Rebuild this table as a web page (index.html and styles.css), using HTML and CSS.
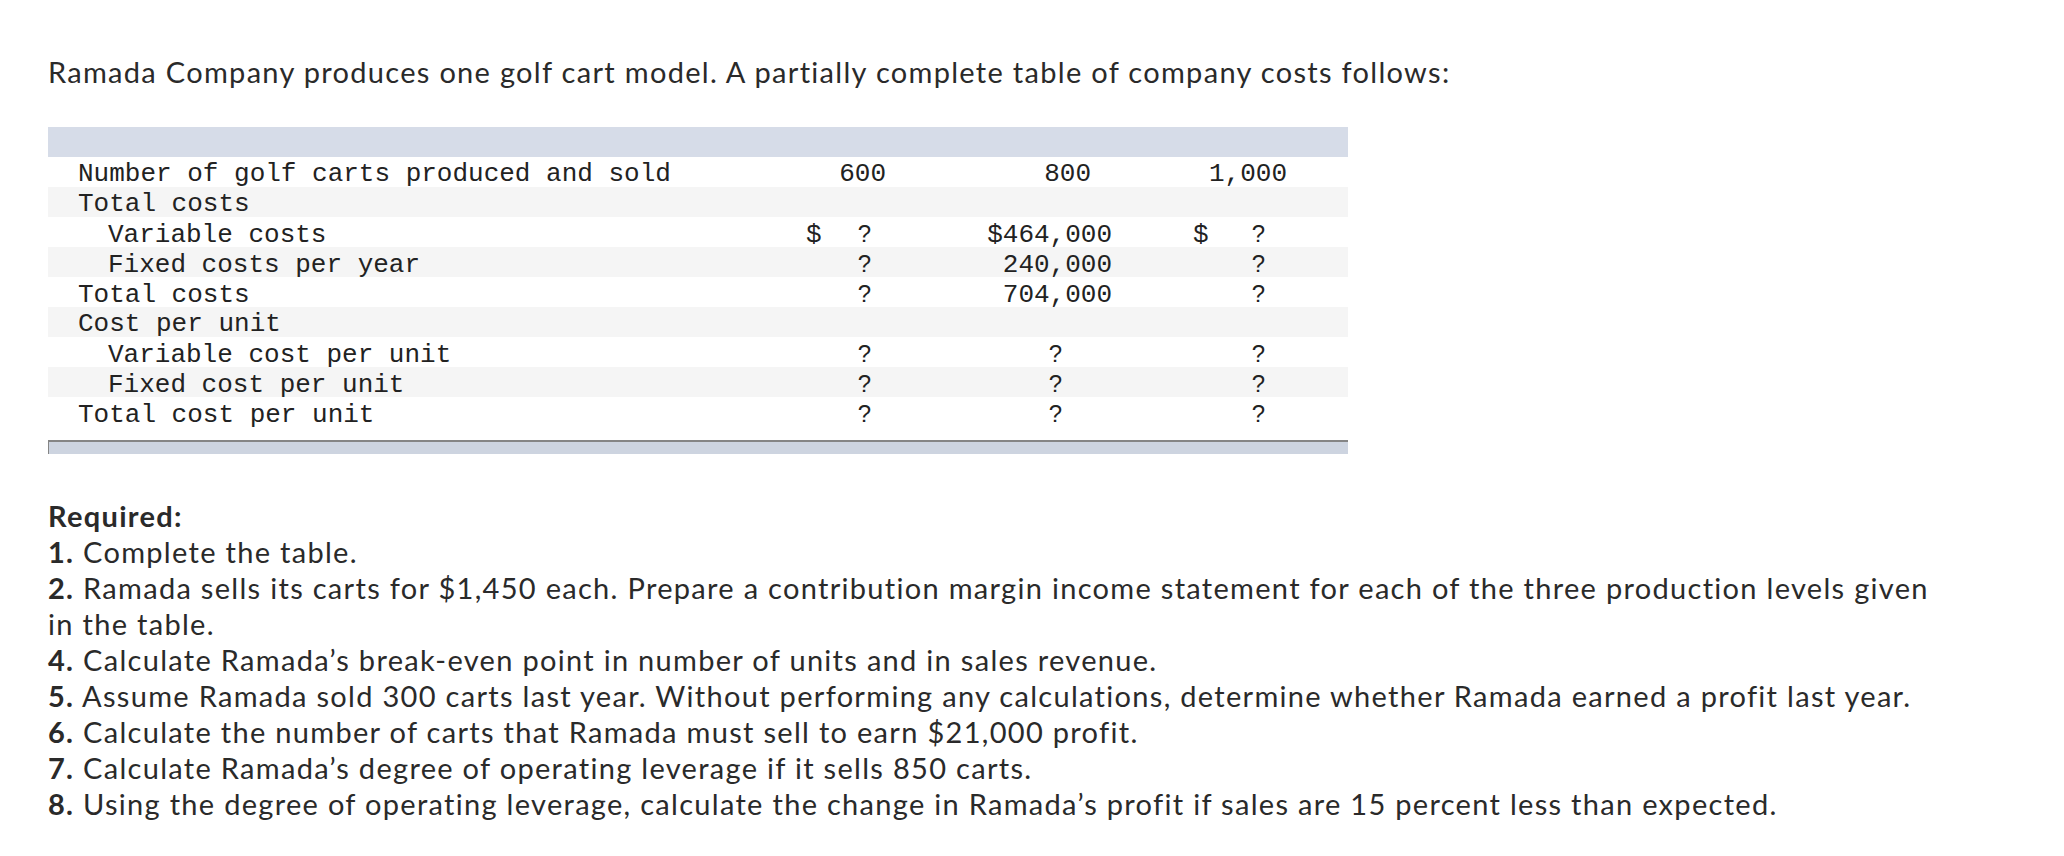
FILE: index.html
```html
<!DOCTYPE html>
<html lang="en">
<head>
<meta charset="utf-8">
<title>Ramada Company</title>
<link rel="stylesheet" href="styles.css">
</head>
<body>
<main class="page">
  <p class="intro">Ramada Company produces one golf cart model. A partially complete table of company costs follows:</p>

  <div class="tbl">
    <div class="thead"></div>
    <div class="row">
      <span class="lbl">Number of golf carts produced and sold</span>
      <span class="c1 hd">600</span>
      <span class="c2 hd">800</span>
      <span class="c3 hd">1,000</span>
    </div>
    <div class="row alt">
      <span class="lbl">Total costs</span>
      <span></span><span></span><span></span>
    </div>
    <div class="row">
      <span class="lbl ind">Variable costs</span>
      <span class="c1 dol"><span>$</span><span class="q">?</span></span>
      <span class="c2 amt">$464,000</span>
      <span class="c3 dol"><span>$</span><span class="q">?</span></span>
    </div>
    <div class="row alt">
      <span class="lbl ind">Fixed costs per year</span>
      <span class="c1 val"><span class="q">?</span></span>
      <span class="c2 amt">240,000</span>
      <span class="c3 val"><span class="q">?</span></span>
    </div>
    <div class="row">
      <span class="lbl">Total costs</span>
      <span class="c1 val"><span class="q">?</span></span>
      <span class="c2 amt">704,000</span>
      <span class="c3 val"><span class="q">?</span></span>
    </div>
    <div class="row alt">
      <span class="lbl">Cost per unit</span>
      <span></span><span></span><span></span>
    </div>
    <div class="row">
      <span class="lbl ind">Variable cost per unit</span>
      <span class="c1 val"><span class="q">?</span></span>
      <span class="c2 mid"><span class="q">?</span></span>
      <span class="c3 val"><span class="q">?</span></span>
    </div>
    <div class="row alt">
      <span class="lbl ind">Fixed cost per unit</span>
      <span class="c1 val"><span class="q">?</span></span>
      <span class="c2 mid"><span class="q">?</span></span>
      <span class="c3 val"><span class="q">?</span></span>
    </div>
    <div class="row">
      <span class="lbl">Total cost per unit</span>
      <span class="c1 val"><span class="q">?</span></span>
      <span class="c2 mid"><span class="q">?</span></span>
      <span class="c3 val"><span class="q">?</span></span>
    </div>
    <div class="tfoot"></div>
  </div>

  <div class="req">
    <p class="line"><b>Required:</b></p>
    <p class="line"><b>1.</b> Complete the table.</p>
    <p class="line"><b>2.</b> <span>Ramada sells its carts for $1,450 each. Prepare a contribution margin income statement for each of the three production levels given</span> <span>in the table.</span></p>
    <p class="line"><b>4.</b> Calculate Ramada’s break-even point in number of units and in sales revenue.</p>
    <p class="line"><b>5.</b> Assume Ramada sold 300 carts last year. Without performing any calculations, determine whether Ramada earned a profit last year.</p>
    <p class="line"><b>6.</b> Calculate the number of carts that Ramada must sell to earn $21,000 profit.</p>
    <p class="line"><b>7.</b> Calculate Ramada’s degree of operating leverage if it sells 850 carts.</p>
    <p class="line"><b>8.</b> Using the degree of operating leverage, calculate the change in Ramada’s profit if sales are 15 percent less than expected.</p>
  </div>
</main>
</body>
</html>
```

FILE: styles.css
```css
* { box-sizing: border-box; }

html, body {
  margin: 0;
  padding: 0;
  background: #ffffff;
}

.page {
  padding: 54px 48px 0 48px;
  font-family: "Lato", "Open Sans", sans-serif;
  font-size: 29px;
  letter-spacing: 1.3px;
  line-height: 36px;
  color: #2a2a2a;
}

.intro {
  margin: 0 0 37px 0;
}

.tbl {
  width: 1300px;
  letter-spacing: 0;
}

.thead {
  height: 30px;
  background: #d6dce8;
}

.row {
  display: grid;
  grid-template-columns: 742px 100px 230px 170px 58px;
  height: 30px;
  padding-top: 4px;
  align-items: center;
  font-family: "Liberation Mono", "Courier New", monospace;
  font-size: 26px;
  line-height: 26px;
  color: #222222;
  background: #ffffff;
}

.row.alt {
  background: #f5f5f5;
}

.lbl {
  padding-left: 30px;
  white-space: pre;
}

.lbl.ind {
  padding-left: 60px;
}

.q {
  font-family: "Liberation Sans", Arial, sans-serif;
  font-size: 24px;
  color: #222222;
}

.hd { text-align: right; }
.c1.hd { padding-right: 4px; }
.c2.hd { padding-right: 29px; }
.c3.hd { padding-right: 3px; }

.dol {
  display: flex;
  justify-content: space-between;
  align-items: baseline;
}
.c1.dol { padding-left: 16px; padding-right: 19px; }
.c3.dol { padding-left: 73px; padding-right: 25px; }

.val { text-align: right; }
.c1.val { padding-right: 19px; }
.c3.val { padding-right: 25px; }

.amt { text-align: right; padding-right: 8px; }
.mid { text-align: right; padding-right: 58px; }

.tfoot {
  margin-top: 13px;
  height: 14px;
  background: #cdd4e0;
  border-top: 2px solid #858585;
  border-left: 1px solid #858585;
}

.req {
  margin-top: 44px;
  width: 1900px;
}

.line {
  margin: 0;
}

.line b {
  font-weight: 700;
}
```
